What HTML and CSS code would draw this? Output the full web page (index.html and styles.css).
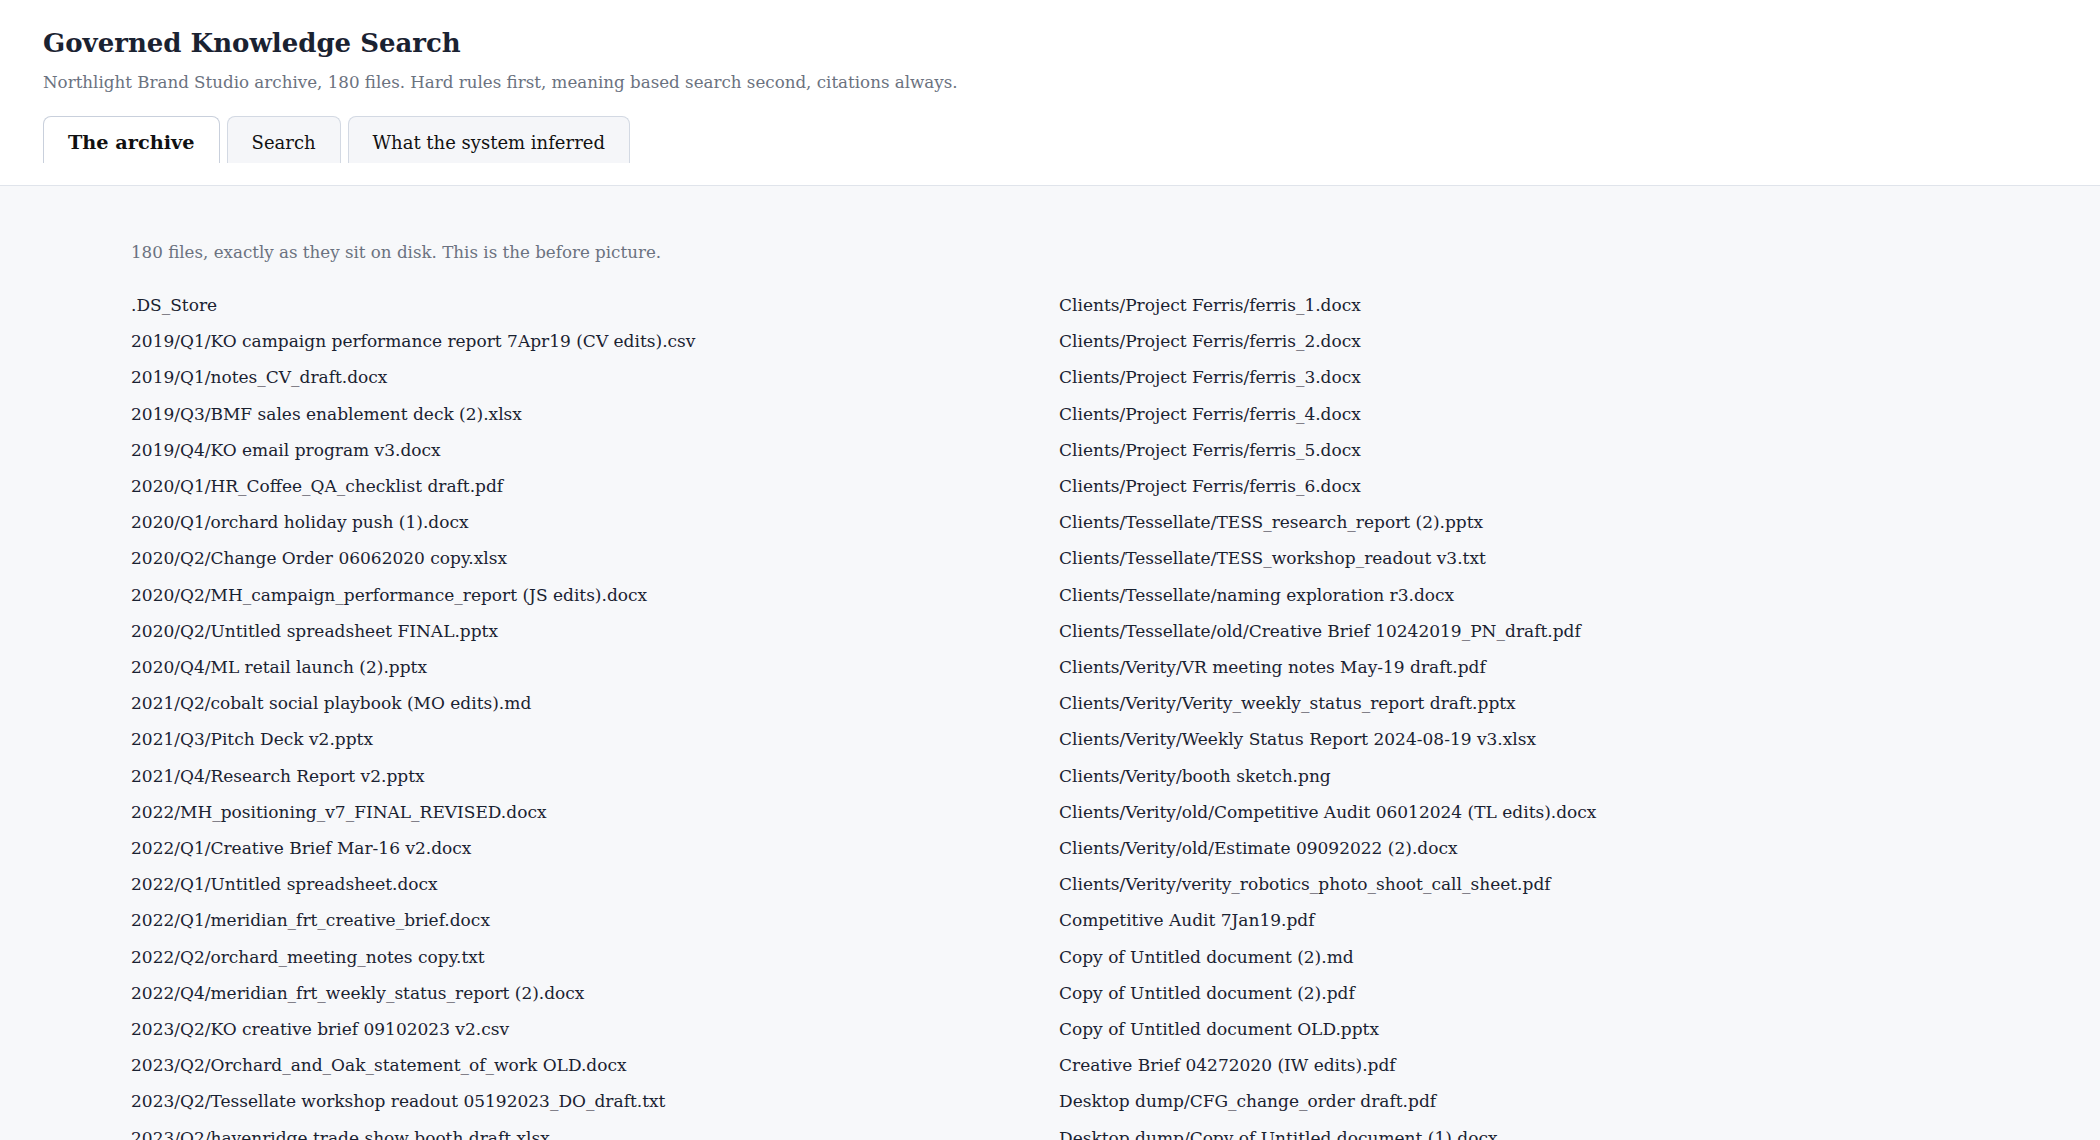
FILE: index.html
```html
<!DOCTYPE html>
<html lang="en">
<head>
<meta charset="utf-8">
<title>Governed Knowledge Search</title>
<link rel="stylesheet" href="styles.css">
</head>
<body>
<div class="header">
	<h1 class="title">Governed Knowledge Search</h1>
	<p class="subtitle">Northlight Brand Studio archive, 180 files. Hard rules first, meaning based search second, citations always.</p>
	<div class="tabs">
		<div class="tab active">The archive</div>
		<div class="tab">Search</div>
		<div class="tab">What the system inferred</div>
	</div>
</div>

<div class="main">
	<p class="intro">180 files, exactly as they sit on disk. This is the before picture.</p>
	<ul class="files">
		<li>.DS_Store</li>
		<li>2019/Q1/KO campaign performance report 7Apr19 (CV edits).csv</li>
		<li>2019/Q1/notes_CV_draft.docx</li>
		<li>2019/Q3/BMF sales enablement deck (2).xlsx</li>
		<li>2019/Q4/KO email program v3.docx</li>
		<li>2020/Q1/HR_Coffee_QA_checklist draft.pdf</li>
		<li>2020/Q1/orchard holiday push (1).docx</li>
		<li>2020/Q2/Change Order 06062020 copy.xlsx</li>
		<li>2020/Q2/MH_campaign_performance_report (JS edits).docx</li>
		<li>2020/Q2/Untitled spreadsheet FINAL.pptx</li>
		<li>2020/Q4/ML retail launch (2).pptx</li>
		<li>2021/Q2/cobalt social playbook (MO edits).md</li>
		<li>2021/Q3/Pitch Deck v2.pptx</li>
		<li>2021/Q4/Research Report v2.pptx</li>
		<li>2022/MH_positioning_v7_FINAL_REVISED.docx</li>
		<li>2022/Q1/Creative Brief Mar-16 v2.docx</li>
		<li>2022/Q1/Untitled spreadsheet.docx</li>
		<li>2022/Q1/meridian_frt_creative_brief.docx</li>
		<li>2022/Q2/orchard_meeting_notes copy.txt</li>
		<li>2022/Q4/meridian_frt_weekly_status_report (2).docx</li>
		<li>2023/Q2/KO creative brief 09102023 v2.csv</li>
		<li>2023/Q2/Orchard_and_Oak_statement_of_work OLD.docx</li>
		<li>2023/Q2/Tessellate workshop readout 05192023_DO_draft.txt</li>
		<li>2023/Q2/havenridge trade show booth draft.xlsx</li>
		<li>2023/Q3/meridian_frt_brand_guidelines v2.pdf</li>
		<li>2023/Q4/KO holiday campaign recap.pptx</li>
		<li>2024/Q1/Orchard_and_Oak_invoice_0114.pdf</li>
		<li>2024/Q2/cobalt launch timeline (2).xlsx</li>

		<li>Clients/Project Ferris/ferris_1.docx</li>
		<li>Clients/Project Ferris/ferris_2.docx</li>
		<li>Clients/Project Ferris/ferris_3.docx</li>
		<li>Clients/Project Ferris/ferris_4.docx</li>
		<li>Clients/Project Ferris/ferris_5.docx</li>
		<li>Clients/Project Ferris/ferris_6.docx</li>
		<li>Clients/Tessellate/TESS_research_report (2).pptx</li>
		<li>Clients/Tessellate/TESS_workshop_readout v3.txt</li>
		<li>Clients/Tessellate/naming exploration r3.docx</li>
		<li>Clients/Tessellate/old/Creative Brief 10242019_PN_draft.pdf</li>
		<li>Clients/Verity/VR meeting notes May-19 draft.pdf</li>
		<li>Clients/Verity/Verity_weekly_status_report draft.pptx</li>
		<li>Clients/Verity/Weekly Status Report 2024-08-19 v3.xlsx</li>
		<li>Clients/Verity/booth sketch.png</li>
		<li>Clients/Verity/old/Competitive Audit 06012024 (TL edits).docx</li>
		<li>Clients/Verity/old/Estimate 09092022 (2).docx</li>
		<li>Clients/Verity/verity_robotics_photo_shoot_call_sheet.pdf</li>
		<li>Competitive Audit 7Jan19.pdf</li>
		<li>Copy of Untitled document (2).md</li>
		<li>Copy of Untitled document (2).pdf</li>
		<li>Copy of Untitled document OLD.pptx</li>
		<li>Creative Brief 04272020 (IW edits).pdf</li>
		<li>Desktop dump/CFG_change_order draft.pdf</li>
		<li>Desktop dump/Copy of Untitled document (1).docx</li>
		<li>Desktop dump/KO_media_plan final.xlsx</li>
		<li>Desktop dump/Untitled spreadsheet (3).xlsx</li>
		<li>Desktop dump/orchard photos/IMG_2231.png</li>
		<li>Estimate 11032021 v2.pdf</li>
	</ul>
</div>
</body>
</html>
```

FILE: styles.css
```css
html, body {margin: 0; padding: 0;}
body {font-family: Georgia, "DejaVu Serif", serif; color: #1a2231; background: #f7f8fa;}
p {margin: 0;}

.header {background: #fff; padding: 26px 43px 22px 43px; border-bottom: 1px solid #e0e4eb;}
.header .title {margin: 0; font-size: 26px; font-weight: bold; line-height: 34px; color: #1a2231;}
.header .subtitle {margin-top: 10px; font-size: 16.7px; line-height: 24px; color: #6b7280;}

.tabs {display: flex; gap: 7px; margin-top: 22px;}
.tabs .tab {height: 40px; line-height: 40px; padding: 6px 24px 0 24px; font-size: 18px; color: #111; background: #f5f6f9; border: 1px solid #d3d9e3; border-bottom: 0; border-radius: 8px 8px 0 0;}
.tabs .tab.active {background: #fff; font-weight: bold; font-size: 19.3px; border-color: #c9d0dc;}

.main {padding: 54px 131px 40px 131px;}
.main .intro {font-size: 16.7px; line-height: 24px; color: #6b7280; margin-bottom: 23px;}

.files {list-style: none; margin: 0; padding: 0; column-count: 2; column-gap: 18px;}
.files li {font-size: 17px; line-height: 36.2px; white-space: nowrap; color: #1a2231;}
```
